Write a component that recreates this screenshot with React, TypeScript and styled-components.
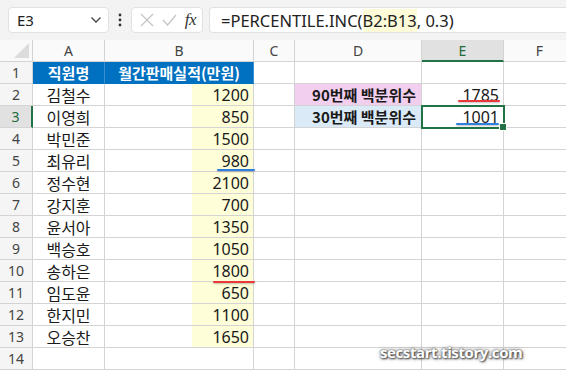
import { Fragment } from 'react';
import styled, { createGlobalStyle } from 'styled-components';

const GlobalStyle = createGlobalStyle`
    html, body {
        margin: 0;
        padding: 0;
        background: #ffffff;
    }
    body {
        font-family: 'Noto Sans', 'Noto Sans CJK KR', sans-serif;
        overflow: hidden;
    }
`;

const Page = styled.div`
    position: relative;
    width: 566px;
    height: 371px;
    overflow: hidden;
    background: #ffffff;
`;

// formula bar //
const Toolbar = styled.div`
    height: 40px;
    box-sizing: border-box;
    display: flex;
    align-items: center;
    padding: 0 0 0 8px;
    background: #f3f3f3;
`;
const Box = styled.div<{ $w?: number }>`
    height: 26px;
    box-sizing: border-box;
    display: flex;
    align-items: center;
    background: #ffffff;
    border: 1px solid #e1e1e1;
    border-radius: 4px;
    width: ${(p) => (p.$w ? `${p.$w}px` : 'auto')};
    flex: ${(p) => (p.$w ? 'none' : '1')};
`;
const NameBox = styled(Box)`
    justify-content: space-between;
    padding: 0 6px 0 8px;
    font-size: 15px;
    color: #222;
`;
const Dots = styled.div`
    width: 22px;
    display: flex;
    justify-content: center;
`;
const FxBox = styled(Box)`
    margin-right: 6px;
    padding: 0 6px 0 8px;
    justify-content: space-between;
`;
const FxText = styled.span`
    font-family: 'Liberation Serif', serif;
    font-style: italic;
    font-size: 17px;
    color: #333;
    letter-spacing: -0.5px;
`;
const FormulaBox = styled(Box)`
    border-right: none;
    border-radius: 4px 0 0 4px;
    padding-left: 11px;
    font-size: 16.5px;
    color: #222;
`;
const RangeRef = styled.span`
    background: #fdfbd8;
`;

// sheet //
const Sheet = styled.div`
    display: grid;
    grid-template-columns: 33px 72px 149px 41px 127px 82px 72px;
    grid-auto-rows: 22px;
    font-family: 'Noto Sans CJK KR', 'Noto Sans', sans-serif;
`;
const Corner = styled.div`
    position: relative;
    background: #f9f9f9;
    border-right: 1px solid #d4d4d4;
    border-bottom: 1px solid #d4d4d4;
    box-sizing: border-box;
    overflow: hidden;
    &::after {
        content: '';
        position: absolute;
        right: 3px;
        bottom: 3px;
        width: 0;
        height: 0;
        border-left: 15px solid transparent;
        border-bottom: 15px solid #dcdcdc;
    }
`;
const ColHead = styled.div<{ $sel?: boolean }>`
    box-sizing: border-box;
    display: flex;
    align-items: center;
    justify-content: center;
    font-family: 'Noto Sans', sans-serif;
    font-size: 14px;
    color: ${(p) => (p.$sel ? '#1e6b3c' : '#444')};
    background: ${(p) => (p.$sel ? '#e1e1e1' : '#fafafa')};
    border-right: 1px solid #d4d4d4;
    border-bottom: ${(p) => (p.$sel ? '2px solid #217346' : '1px solid #d4d4d4')};
`;
const RowHead = styled.div<{ $sel?: boolean }>`
    box-sizing: border-box;
    display: flex;
    align-items: center;
    justify-content: center;
    font-family: 'Noto Sans', sans-serif;
    font-size: 14px;
    color: ${(p) => (p.$sel ? '#1e6b3c' : '#444')};
    background: ${(p) => (p.$sel ? '#e1e1e1' : '#f5f5f5')};
    border-bottom: 1px solid #d4d4d4;
    border-right: ${(p) => (p.$sel ? '2px solid #217346' : '1px solid #d4d4d4')};
`;
const Cell = styled.div<{ $bg?: string; $align?: string }>`
    position: relative;
    box-sizing: border-box;
    display: flex;
    align-items: center;
    justify-content: ${(p) => p.$align || 'flex-start'};
    padding: 0 4px;
    font-size: 16px;
    color: #1a1a1a;
    background: ${(p) => p.$bg || '#ffffff'};
    border-right: 1px solid #d4d4d4;
    border-bottom: 1px solid #d4d4d4;
    white-space: nowrap;
`;
const HeadCell = styled(Cell)`
    font-size: 15px;
    font-weight: 700;
    color: #ffffff;
    background: #0070c0;
    border-right: 1px solid #3b8fd0;
    border-bottom: 1px solid #0070c0;
`;
const ValueCell = styled(Cell)`
    justify-content: flex-end;
    padding: 0;
`;
const Fill = styled.div`
    width: 61px;
    height: 100%;
    display: flex;
    align-items: center;
    justify-content: flex-end;
    padding-right: 4px;
    box-sizing: border-box;
    background: #fefed9;
    font-family: 'Noto Sans', sans-serif;
`;
const Num = styled.span`
    font-family: 'Noto Sans', sans-serif;
    font-size: 16px;
`;
const LabelCell = styled(Cell)`
    justify-content: flex-end;
    font-size: 15px;
    font-weight: 700;
    padding-right: 5px;
`;
const Selected = styled(Cell)`
    justify-content: flex-end;
    outline: 2px solid #217346;
    outline-offset: -1px;
    z-index: 2;
    &::after {
        content: '';
        position: absolute;
        right: -4px;
        bottom: -4px;
        width: 6px;
        height: 6px;
        background: #217346;
        border: 1px solid #ffffff;
    }
`;
const Mark = styled.div<{ $color: string; $left: number; $width: number; $bottom: number }>`
    position: absolute;
    left: ${(p) => p.$left}px;
    width: ${(p) => p.$width}px;
    bottom: ${(p) => p.$bottom}px;
    height: 2px;
    border-radius: 1px;
    background: ${(p) => p.$color};
    box-shadow: 0 1px 2px rgba(0, 0, 0, 0.25);
    z-index: 3;
`;
const Watermark = styled.div`
    position: absolute;
    left: 380px;
    top: 342px;
    font-family: 'Open Sans', 'Noto Sans', sans-serif;
    font-weight: 700;
    font-size: 15px;
    letter-spacing: -0.4px;
    color: #ffffff;
    text-shadow: 0 0 2px #555, 1px 1px 2px #444, 0 0 4px rgba(0, 0, 0, 0.5);
`;

const names = ['김철수', '이영희', '박민준', '최유리', '정수현', '강지훈', '윤서아', '백승호', '송하은', '임도윤', '한지민', '오승찬'];
const sales = [1200, 850, 1500, 980, 2100, 700, 1350, 1050, 1800, 650, 1100, 1650];
const cols = ['A', 'B', 'C', 'D', 'E', 'F'];

const App = () => {
    const rows = Array.from({ length: 14 }, (_, i) => i + 1);

    const renderD = (r: number) => {
        if (r === 2) return <LabelCell $bg='#f2cfee'>90번째 백분위수</LabelCell>;
        if (r === 3) return <LabelCell $bg='#daeaf7'>30번째 백분위수</LabelCell>;
        return <Cell />;
    };
    const renderE = (r: number) => {
        if (r === 2) return (
            <Cell $align='flex-end'>
                <Num>1785</Num>
                <Mark $color='#e8383d' $left={36} $width={42} $bottom={3} />
            </Cell>
        );
        if (r === 3) return (
            <Selected>
                <Num>1001</Num>
                <Mark $color='#2f7fe0' $left={34} $width={43} $bottom={2} />
            </Selected>
        );
        return <Cell />;
    };

    return (
        <Page>
            <GlobalStyle />
            <Toolbar>
                <NameBox $w={101}>
                    <span>E3</span>
                    <svg width='12' height='8' viewBox='0 0 12 8'>
                        <path d='M1.5 1.5 L6 6 L10.5 1.5' fill='none' stroke='#444' strokeWidth='1.3' />
                    </svg>
                </NameBox>
                <Dots>
                    <svg width='4' height='14' viewBox='0 0 4 14'>
                        <circle cx='2' cy='2' r='1.4' fill='#333' />
                        <circle cx='2' cy='7' r='1.4' fill='#333' />
                        <circle cx='2' cy='12' r='1.4' fill='#333' />
                    </svg>
                </Dots>
                <FxBox $w={72}>
                    <svg width='14' height='14' viewBox='0 0 14 14'>
                        <path d='M1 1 L13 13 M13 1 L1 13' stroke='#c4c4c4' strokeWidth='1.2' />
                    </svg>
                    <svg width='15' height='12' viewBox='0 0 15 12'>
                        <path d='M1 6 L5.5 11 L14 1' fill='none' stroke='#c4c4c4' strokeWidth='1.2' />
                    </svg>
                    <FxText>fx</FxText>
                </FxBox>
                <FormulaBox>
                    =PERCENTILE.INC(<RangeRef>B2:B13</RangeRef>, 0.3)
                </FormulaBox>
            </Toolbar>
            <Sheet>
                <Corner />
                {cols.map((c) => (
                    <ColHead key={c} $sel={c === 'E'}>{c}</ColHead>
                ))}
                {rows.map((r) => (
                    <Fragment key={r}>
                        <RowHead $sel={r === 3}>{r}</RowHead>
                        {r === 1 ? (
                            <>
                                <HeadCell $align='center'>직원명</HeadCell>
                                <HeadCell $align='center'>월간판매실적(만원)</HeadCell>
                            </>
                        ) : r <= 13 ? (
                            <>
                                <Cell $align='center'>{names[r - 2]}</Cell>
                                <ValueCell>
                                    <Fill>{sales[r - 2]}</Fill>
                                    {r === 5 && <Mark $color='#2f7fe0' $left={112} $width={38} $bottom={0} />}
                                    {r === 10 && <Mark $color='#e8383d' $left={108} $width={42} $bottom={-2} />}
                                </ValueCell>
                            </>
                        ) : (
                            <>
                                <Cell />
                                <Cell />
                            </>
                        )}
                        <Cell />
                        {renderD(r)}
                        {renderE(r)}
                        <Cell />
                    </Fragment>
                ))}
            </Sheet>
            <Watermark>secstart.tistory.com</Watermark>
        </Page>
    );
};
export default App;
